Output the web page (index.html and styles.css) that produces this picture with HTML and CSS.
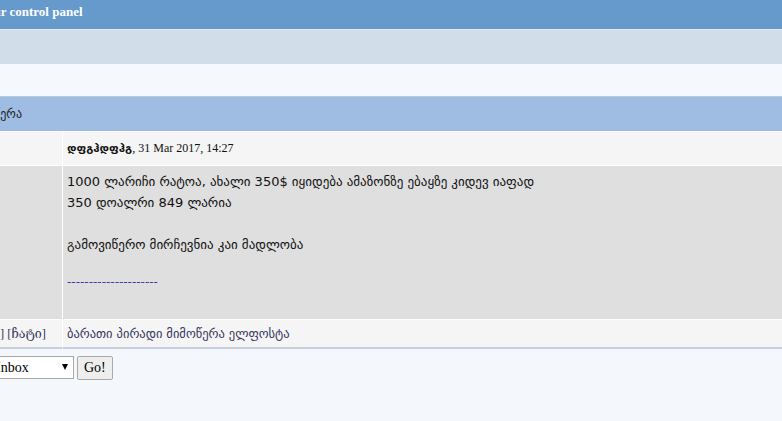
FILE: index.html
```html
<!DOCTYPE html>
<html lang="ka">
<head>
    <meta charset="UTF-8">
    <meta name="viewport" content="width=device-width, initial-scale=1.0">
    <title>Your control panel</title>
    <link rel="stylesheet" href="styles.css">
</head>
<body>
    <div class="page">
        <div class="titlebar"><span>Your control panel</span></div>
        <div class="menubar"></div>
        <div class="subbar"></div>
        <div class="maintitle"><span>პირადი მიმოწერა</span></div>
        <table class="msg">
            <colgroup>
                <col class="side-col">
                <col>
            </colgroup>
            <tr class="info">
                <td class="side"></td>
                <td class="main"><b class="author">დფგჰდფჰგ</b>, 31 Mar 2017, 14:27</td>
            </tr>
            <tr class="body">
                <td class="side"></td>
                <td class="main">
                    <div class="post">1000 ლარიჩი რატოა, ახალი 350$ იყიდება ამაზონზე ებაყზე კიდევ იაფად<br>350 დოალრი 849 ლარია<br><br>გამოვიწერო მირჩევნია კაი მადლობა</div>
                    <div class="sig">---------------------</div>
                </td>
            </tr>
            <tr class="foot">
                <td class="side"><a href="#">[პროფილი]</a> <a href="#">[ჩატი]</a></td>
                <td class="main"><a href="#">ბარათი პირადი მიმოწერა ელფოსტა</a></td>
            </tr>
        </table>
        <form class="jump">
            <span class="select-wrap">
                <select>
                    <option>Inbox</option>
                    <option>Sent</option>
                </select>
            </span>
            <button type="button">Go!</button>
        </form>
    </div>
</body>
</html>
```

FILE: styles.css
```css
body {
    margin: 0;
    background-color: #f4f7fc;
    font-family: "Liberation Serif", "DejaVu Serif", serif;
    overflow: hidden;
}
.page {
    margin-left: -200px;
    width: calc(100% + 200px);
}
.titlebar {
    height: 29px;
    background-color: #6699cc;
    border-bottom: 1px solid #dfeaf6;
    color: #fff;
    font-weight: bold;
    font-size: 13px;
    line-height: 23px;
    padding-left: 179px;
}
.menubar {
    height: 34px;
    background-color: #d1dde9;
}
.subbar {
    height: 32px;
    background-color: #f5f8fc;
    border-bottom: 1px solid #b7c9df;
}
.maintitle {
    height: 34px;
    line-height: 34px;
    background-color: #9fbde3;
    font-family: "DejaVu Sans", sans-serif;
    font-size: 12px;
    color: #222;
}
.maintitle span {
    display: inline-block;
    width: 222px;
    text-align: right;
}
.msg {
    width: 100%;
    table-layout: fixed;
    border-collapse: separate;
    border-spacing: 0;
    background-color: #fff;
}
.side-col {
    width: 263px;
}
.msg td {
    box-sizing: border-box;
    padding: 0 0 0 4px;
    vertical-align: top;
}
.msg td.side {
    border-right: 1px solid #fff;
    text-align: right;
    padding: 0 16px 0 0;
}
.info td {
    background-color: #f5f5f5;
    border-top: 1px solid #fff;
    height: 34px;
    vertical-align: middle;
    font-size: 12px;
    color: #111;
}
.author {
    font-family: "DejaVu Sans", sans-serif;
    font-size: 11.4px;
}
.body td {
    background-color: #dfdfdf;
    border-top: 1px solid #fff;
    border-bottom: 1px solid #fff;
    height: 155px;
    font-family: "DejaVu Sans", sans-serif;
    font-size: 13px;
    color: #111;
}
.post {
    padding-top: 5px;
    line-height: 21px;
}
.sig {
    margin-top: 17px;
    font-size: 12px;
    color: #3b3bb0;
    line-height: 21px;
}
.foot td {
    background-color: #f5f5f5;
    border-bottom: 2px solid #c5cfdd;
    height: 29px;
    vertical-align: middle;
    font-size: 12.5px;
}
.foot a {
    color: #34345c;
    text-decoration: none;
}
.foot td.main a {
    font-family: "DejaVu Sans", sans-serif;
}
.jump {
    margin: 7px 0 0 188px;
    display: flex;
    align-items: flex-start;
    gap: 3px;
}
.select-wrap {
    position: relative;
}
.select-wrap::after {
    content: "";
    position: absolute;
    right: 6px;
    top: 8px;
    border-left: 3px solid transparent;
    border-right: 3px solid transparent;
    border-top: 6px solid #000;
    pointer-events: none;
}
.jump select {
    appearance: none;
    width: 86px;
    height: 23px;
    padding: 0 0 0 7px;
    font-family: "Liberation Serif", serif;
    font-size: 14px;
    color: #000;
    border: 1px solid #a9a9a9;
    border-radius: 0;
    background-color: #fff;
}
.jump button {
    height: 24px;
    padding: 0 6px;
    font-family: "Liberation Serif", serif;
    font-size: 14px;
    border: 1px solid #aaa;
    border-radius: 2px;
    background-color: #eee;
}
```
